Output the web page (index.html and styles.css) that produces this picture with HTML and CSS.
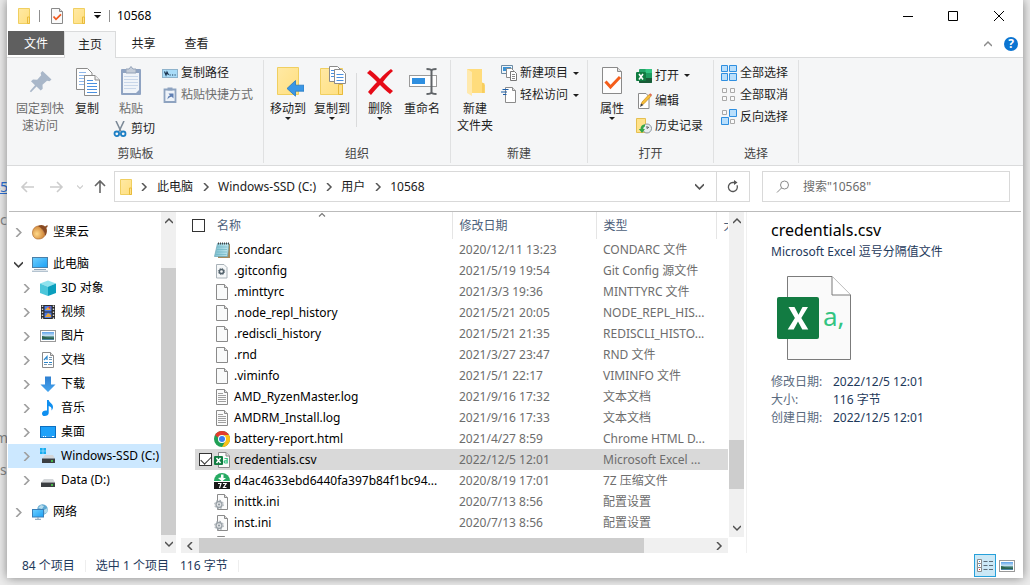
FILE: index.html
```html
<!DOCTYPE html>
<html lang="zh-CN">
<head>
<meta charset="utf-8">
<title>10568</title>
<link rel="stylesheet" href="styles.css">
</head>
<body>
<svg class="sprite" aria-hidden="true">
  <defs>
    <linearGradient id="gFold" x1="0" x2="1" y1="0" y2="1"><stop offset="0" stop-color="#ffe9a4"/><stop offset="1" stop-color="#ffdf80"/></linearGradient>
    <linearGradient id="gScreen" x1="0" x2="1" y1="0" y2="1"><stop offset="0" stop-color="#6fd0ff"/><stop offset="1" stop-color="#1aa0f5"/></linearGradient>
    <linearGradient id="gBlue" x1="0" x2="0" y1="0" y2="1"><stop offset="0" stop-color="#2f7fd0"/><stop offset="1" stop-color="#45a5f0"/></linearGradient>
    <linearGradient id="gNote" x1="0" x2="1" y1="0" y2="0"><stop offset="0" stop-color="#7fc0d0"/><stop offset="1" stop-color="#c3e8ee"/></linearGradient>
    <linearGradient id="gSky" x1="0" x2="0" y1="0" y2="1"><stop offset="0" stop-color="#5da2ea"/><stop offset=".5" stop-color="#cfe6f5"/><stop offset=".6" stop-color="#3c7a6a"/><stop offset="1" stop-color="#4f86b0"/></linearGradient>
    <radialGradient id="gNut" cx=".35" cy=".6" r=".7"><stop offset="0" stop-color="#ffd98a"/><stop offset="1" stop-color="#c9782a"/></radialGradient>
  </defs>
  <symbol id="folder" viewBox="0 0 16 16"><path d="M2.5.5h11v15h-11z" fill="url(#gFold)" stroke="#f0cf60"/><path d="M11.500 15.500v-6.500h2v6.500z" fill="#ffe08a" stroke="#e8bb3a"/></symbol>
  <symbol id="doc-check" viewBox="0 0 16 16"><path d="M2.500.5h8l3 3v12h-11z" fill="#fafafa" stroke="#8a8a8a"/><path d="M10.500.5v3h3" fill="#ddd" stroke="#8a8a8a"/><path d="M4.500 8.500l2.500 2.800 5-5" fill="none" stroke="#f0591e" stroke-width="1.800"/></symbol>
  <symbol id="pin" viewBox="0 0 32 32"><path d="M17.500 6l9 8.500-2 1.800-2.500-.5-4.500 4 .2 4-2 1.800-4.200-4.200L6 27.200l-1.200-1 5.200-6-4-4 2-1.800 4.200.4 4-4.500-.6-2.400z" transform="translate(1 -1)" fill="#a9b7c9"/></symbol>
  <symbol id="copy" viewBox="0 0 32 32"><path d="M5.500 2.500h11l4.500 4.500v16.500H5.500z" fill="#fff" stroke="#8b8b8b"/><path d="M8 9.500h8M8 12.500h8M8 15.500h8M8 18.500h8M8 6.500h7" stroke="#8fb7ea"/><path d="M13.500 9.500h10.500l4.500 4.500v15.500h-15z" fill="#fff" stroke="#8b8b8b"/><path d="M24 9.500v4.500h4.500" fill="#eee" stroke="#8b8b8b"/><path d="M16 14.500h6M16 17.500h10M16 20.500h10M16 23.500h10M16 26.500h10" stroke="#4a90e0"/></symbol>
  <symbol id="paste" viewBox="0 0 32 32"><rect x="6" y="3" width="20" height="26" rx="1" fill="#8fa3c2"/><path d="M8 7h16v17l-3 3H8z" fill="#f0f4f9"/><path d="M9 10.500h14M9 13.500h14M9 16.500h14M9 19.500h14M9 22.500h12" stroke="#c9d7ea"/><path d="M11 3h3l2-2.500L18 3h3v4H11z" fill="#c4ccd8" stroke="#93a2b8"/></symbol>
  <symbol id="scissors" viewBox="0 0 16 16"><path d="M4 0l5 10.500M12 0L7 10.500" stroke="#7c8a98" stroke-width="1.600"/><circle cx="4.800" cy="12.800" r="2.300" fill="none" stroke="#1d7fc4" stroke-width="1.800"/><circle cx="11.200" cy="12.800" r="2.300" fill="none" stroke="#1d7fc4" stroke-width="1.800"/></symbol>
  <symbol id="path" viewBox="0 0 16 16"><rect x=".5" y="4.500" width="15" height="8" fill="#a9dcf8" stroke="#8fb3cc"/><path d="M2.500 6.500l1.500 3.500 1-3 1.500 3M7.500 10h1.200M10 10h1.200M12.500 10h1.200" fill="none" stroke="#1c3550" stroke-width="1.200"/></symbol>
  <symbol id="shortcut" viewBox="0 0 16 16"><path d="M2.500 2.500h11v12.500h-11z" fill="#eef3f9" stroke="#8ea3c0" stroke-width="1.800"/><path d="M5.500.5h5v3h-5z" fill="#8ea3c0"/><path d="M5.500 12.500c0-3 1.200-3.700 2.700-4L6.500 6.500h5v5L9.800 9.800c-2 .2-3 1-4.300 2.700z" fill="#5f7fb3"/></symbol>
  <symbol id="move-to" viewBox="0 0 32 32"><path d="M5.500 1.500h21v27h-21z" fill="url(#gFold)" stroke="#f0cf60"/><path d="M15 22.500l8.500-8v4.700h8.500v6h-8.500v5z" fill="#3a97e6" stroke="#2578c0" stroke-width=".8"/></symbol>
  <symbol id="copy-to" viewBox="0 0 32 32"><path d="M4.500 2.500h22v26h-22z" fill="url(#gFold)" stroke="#f0cf60"/><path d="M22.500 28.500v-10h4v10z" fill="#ffe08a" stroke="#e8bb3a"/><path d="M13.500.5h8l3 3v12h-11z" fill="#fff" stroke="#8b8b8b"/><path d="M15 4.500h5M15 7.500h5M15 10.500h5" stroke="#4a90e0"/><path d="M18.500 3.500h7l4 4v10h-11z" fill="#fff" stroke="#8b8b8b"/><path d="M20.500 8.500h7M20.500 11.500h7M20.500 14.500h7" stroke="#4a90e0"/></symbol>
  <symbol id="delete" viewBox="0 0 32 32"><path d="M6 4c4 3 7 6 10 9 3-4 7-7 11-10l2 2c-4 3-7 7-10 11 3 3 6 6 10 9l-3 3c-4-3-7-6-10-9-3 3-6 6-9 10l-3-3c3-4 6-7 9-10-3-3-6-6-10-9z" fill="#e60b17"/></symbol>
  <symbol id="rename" viewBox="0 0 32 32"><rect x="3.500" y="9.500" width="27" height="11" fill="#fff" stroke="#9a9a9a"/><rect x="6" y="12" width="13" height="6" fill="#2f8fe0"/><path d="M25.500 4v24M20.500 3c3 0 5 .5 5 2 0-1.500 2-2 5-2M20.500 28c3 0 5-.5 5-2 0 1.500 2 2 5 2" fill="none" stroke="#606468" stroke-width="2"/></symbol>
  <symbol id="new-folder" viewBox="0 0 32 32"><path d="M8 3h15v14l3 2v8H8z" fill="#ffdc7c"/><path d="M8 3l5 3v24l-5-3z" fill="#ffe9ad"/><path d="M23 16.500l2.500 1V27H23z" fill="#f8ce5e"/></symbol>
  <symbol id="new-item" viewBox="0 0 16 16"><path d="M.5.5h11v8H.5z" fill="#eef6fc" stroke="#6c8aa3"/><path d="M2 2h8v4H2z" fill="#3a93d6"/><path d="M5.500 3.500h5l2 2v7h-7z" fill="#fff" stroke="#8b8b8b"/><path d="M9.500 6.500h4l2 2v7h-6z" fill="#fff" stroke="#777"/><path d="M11 9.500h3M11 11.500h3M11 13.500h3" stroke="#888"/></symbol>
  <symbol id="easy" viewBox="0 0 16 16"><path d="M4.500.5h7l3 3v12h-10z" fill="#fff" stroke="#8b8b8b"/><path d="M11.500.5v3h3" fill="#ddd" stroke="#8b8b8b"/><path d="M1.500 2.500h6M0 5h6M2 7.500h3.500" stroke="#1d5ea8" stroke-width="1.200"/></symbol>
  <symbol id="props" viewBox="0 0 32 32"><path d="M6.500 1.500h15l4 4v22h-19z" fill="#fdfdfd" stroke="#8a8a8a"/><path d="M21.500 1.500v4h4" fill="#ddd" stroke="#8a8a8a"/><path d="M9.500 15.500l5 5.500 9.500-10" fill="none" stroke="#f45d1a" stroke-width="3"/></symbol>
  <symbol id="excel" viewBox="0 0 16 16"><rect x="3" y="1" width="13" height="14" rx="1" fill="#21a366"/><path d="M9.500 1H15a1 1 0 011 1v3H9.500z" fill="#33c481"/><path d="M3 10h13v4a1 1 0 01-1 1H4a1 1 0 01-1-1z" fill="#185c37"/><path d="M9.500 5H16v5H9.500z" fill="#1f9d60"/><rect y="4" width="10" height="9" rx="1" fill="#107c41"/><path d="M3 6l4 5.500M7 6l-4 5.500" stroke="#fff" stroke-width="1.600"/></symbol>
  <symbol id="edit" viewBox="0 0 16 16"><path d="M2.500.5h7.500l3 3v12H2.500z" fill="#fff" stroke="#8b8b8b"/><path d="M5 12l1-3 7-7.500 2 1.700-7 7.500z" fill="#f6bf3a" stroke="#c98a20" stroke-width=".7"/><path d="M13 1.500l1.200-1.200 2 1.700L15 3.200z" fill="#e06a50"/><path d="M4 14l1-3.500L7.500 12z" fill="#444"/></symbol>
  <symbol id="history" viewBox="0 0 16 16"><path d="M.5.5h9v14h-9z" fill="#ffe28a" stroke="#e5bf50"/><circle cx="11" cy="10.500" r="4.500" fill="#e8edf0" stroke="#8c969e"/><path d="M11 8v2.500l2-1.500" fill="none" stroke="#555"/><path d="M9 6.500c-3 0-4.500 2-4.500 4.500H2.800L6 15l3-4H7.300c0-1.500.7-2.500 1.700-2.500z" fill="#36a64a"/></symbol>
  <symbol id="sel-all" viewBox="0 0 16 16"><path d="M.5.5h6v6h-6zM8.500.5h7v6h-7zM.5 8.500h6v7h-6zM8.500 8.500h7v7h-7z" fill="#b9dffc" stroke="#2f8fe0"/></symbol>
  <symbol id="sel-none" viewBox="0 0 16 16"><path d="M1.500 1.500h4v4h-4zM9.500 1.500h4v4h-4zM1.500 9.500h4v4h-4zM9.500 9.500h4v4h-4z" fill="#fafafa" stroke="#a9a9a9"/></symbol>
  <symbol id="sel-inv" viewBox="0 0 16 16"><path d="M1.500 1.500h4v4h-4zM9.500 10.500h4v4h-4z" fill="#fafafa" stroke="#a9a9a9"/><path d="M8.500.5h7v7h-7zM.5 8.500h7v7h-7z" fill="#b9dffc" stroke="#2f8fe0"/></symbol>
  <symbol id="nut" viewBox="0 0 16 16"><path d="M.5 8C1 4 4 1.500 8 2l5 8c0 3-3 5.500-8 5C1.500 14 .2 11 .5 8z" fill="url(#gNut)" stroke="#a9652a" stroke-width=".6"/><path d="M6 2c3-2 6-1 7 .5L15.500 1v2l-1.200.7c1.200 2.500.7 5.300-.8 8.300C12.500 8 10 4 6 2z" fill="#8a4b22"/></symbol>
  <symbol id="pc" viewBox="0 0 16 16"><rect x=".5" y="1.500" width="15" height="10" fill="url(#gScreen)" stroke="#4a7fa8"/><path d="M2 13.500h12M0 15.200h16" stroke="#93a8bb"/></symbol>
  <symbol id="cube" viewBox="0 0 16 16"><path d="M0 3.500L8 .5l8 3-8 3.300z" fill="#8fe3ee"/><path d="M0 3.500l8 3.300V16l-8-3z" fill="#4cc6da"/><path d="M16 3.500L8 6.800V16l8-3z" fill="#0a9fbd"/></symbol>
  <symbol id="video" viewBox="0 0 16 16"><path d="M1 1h14v14H1z" fill="#2b2b2b"/><path d="M2.500 1.500v14M13.500 1.500v14" stroke="#ddd" stroke-width="1.400" stroke-dasharray="1.500 1.500"/><path d="M4.500 2h7v5.500h-7zM4.500 8.500h7V14h-7z" fill="#4b7be8"/><path d="M5 6l3-3 3 3zM5 13l3-4 3 2v2z" fill="#e8a53a"/><circle cx="9.500" cy="3.500" r="1" fill="#d33"/></symbol>
  <symbol id="picture" viewBox="0 0 16 16"><rect x=".5" y="2.500" width="15" height="11" fill="#fff" stroke="#9a9a9a"/><rect x="2" y="4" width="12" height="8" fill="url(#gSky)"/><path d="M2 8l5 1.500 7 .5v1H2z" fill="#2c6350"/></symbol>
  <symbol id="docs" viewBox="0 0 16 16"><path d="M2.500.5h8l3 3v12h-11z" fill="#fff" stroke="#8a8a8a"/><path d="M10.500.5v3h3" fill="#ddd" stroke="#8a8a8a"/><path d="M9 5.500h3M9 7.500h3M4 12.500h3M8 12.500h4" stroke="#7898b0"/><path d="M4 8l3-3.500V8M4 10.500h4M9 10.500h3" fill="none" stroke="#2a86cc" stroke-width="1.200"/></symbol>
  <symbol id="download" viewBox="0 0 16 16"><path d="M5 .5h6v8h4.500L8 16 .5 8.500H5z" fill="url(#gBlue)"/></symbol>
  <symbol id="music" viewBox="0 0 16 16"><path d="M7 0h1.700c.5 3 4.300 3.500 4.300 7 0 1.500-.6 2.500-1.500 3.500.5-3-1-4-2.800-4.500V13c0 2-2 3-4 3S2 14.800 2 13.400C2 11.500 4.500 10 7 10.600z" fill="#0f8ff0"/></symbol>
  <symbol id="desktop" viewBox="0 0 16 16"><rect x=".5" y="2.500" width="15" height="11" fill="url(#gBlue)" stroke="#0d6fc0"/><path d="M1 3h14v9H1z" fill="#1da1fa"/><path d="M3 12.500h1M5 12.500h1M12 12.500h2" stroke="#fff"/></symbol>
  <symbol id="drive" viewBox="0 0 16 16"><path d="M4 7h9l2 3.500H1z" fill="#d3d6d9"/><path d="M1 10.500h14V15H1z" fill="#3c3f42"/><path d="M11 13h2" stroke="#4be04b" stroke-width="1.400"/></symbol>
  <symbol id="windrive" viewBox="0 0 16 16"><path d="M5 7h8l2 3.500H2z" fill="#d3d6d9"/><path d="M2 10.500h13V15H2z" fill="#3c3f42"/><path d="M11 13h2" stroke="#4be04b" stroke-width="1.400"/><path d="M0 0h2.700v2.700H0zM3.300 0H6v2.700H3.300zM0 3.300h2.700V6H0zM3.300 3.300H6V6H3.300z" fill="#18aef0"/></symbol>
  <symbol id="network" viewBox="0 0 16 16"><circle cx="10.500" cy="5.500" r="5.300" fill="#5ea8d2"/><path d="M6 4l3-3 3 1-2 3zM12 6l3.500-2v4l-3 2z" fill="#b6dcec"/><rect x=".5" y="5.500" width="11" height="7.500" fill="url(#gScreen)" stroke="#3a7fb8"/><path d="M6 13v2M3 15.300h6" stroke="#7f9bb3"/></symbol>
  <symbol id="notepad" viewBox="0 0 16 16"><path d="M4 2h12v14H4z" fill="#a88a5a"/><path d="M3.500 1.500H15L13.500 14.500H.5z" fill="url(#gNote)" stroke="#69a5b5" stroke-width=".7"/><path d="M3 5h10.500M3 7.500h10M2.500 10h10.500M2 12.500h10.500" stroke="#6fb4c4" stroke-width=".7"/><path d="M4 1.500h11" stroke="#444" stroke-width="2" stroke-dasharray="1 1"/></symbol>
  <symbol id="gitcfg" viewBox="0 0 16 16"><path d="M2.500 1.500h7.500l3 3v10.500H2.500z" fill="#f6f8f9" stroke="#a9b2b8"/><circle cx="7.500" cy="8.500" r="2.100" fill="none" stroke="#53626c" stroke-width="1.500"/><circle cx="7.500" cy="8.500" r="3.200" fill="none" stroke="#53626c" stroke-width=".8" stroke-dasharray="1.300 1.210"/></symbol>
  <symbol id="file" viewBox="0 0 16 16"><path d="M2.500.5h8l3 3v12h-11z" fill="#f9fafa" stroke="#8a8a8a"/><path d="M10.500.5v3h3" fill="#ddd" stroke="#8a8a8a"/></symbol>
  <symbol id="text" viewBox="0 0 16 16"><path d="M2.500.5h8l3 3v12h-11z" fill="#fbfbfb" stroke="#8a8a8a"/><path d="M10.500.5v3h3" fill="#ddd" stroke="#8a8a8a"/><path d="M4 4.500h5M4 6.500h8M4 8.500h8M4 10.500h8M4 12.500h8" stroke="#a0a0a0"/></symbol>
  <symbol id="chrome" viewBox="0 0 16 16"><circle cx="8" cy="8" r="8" fill="#1fa055"/><path d="M8 0a8 8 0 016.930 4H8a4 4 0 00-3.800 2.800L1.070 4A8 8 0 018 0z" fill="#e33b2e"/><path d="M14.930 4A8 8 0 018 16l3.460-6A4 4 0 0011 5.500L10 4z" fill="#fbc116"/><circle cx="8" cy="8" r="4" fill="#fff"/><circle cx="8" cy="8" r="3" fill="#3a7df0"/></symbol>
  <symbol id="csv" viewBox="0 0 16 16"><path d="M4.500.5H12l3.500 3.500v11.500h-11z" fill="#fafafa" stroke="#8a8a8a"/><path d="M12 .5v3.500h3.500" fill="#ddd" stroke="#8a8a8a"/><rect y="4" width="9" height="9" rx="1" fill="#107c41"/><path d="M2.500 6l4 5M6.500 6l-4 5" stroke="#fff" stroke-width="1.500"/><path d="M10.500 6.500h2.700V11h-2.200c-1.200-.3-1.200-2 0-2.200h2" fill="none" stroke="#33c481" stroke-width="1.200"/></symbol>
  <symbol id="seven" viewBox="0 0 16 16"><path d="M0 8a8 8 0 0116 0z" fill="#27ab63"/><path d="M7 1.500h2.500V5H12L8 8.500 4 5l3-.5z" fill="#fff"/><path d="M0 9h16v7H0z" fill="#191919"/><path d="M4 10.500h3l-1.500 4.500M9 10.500h3.200L9.500 14.500h3" fill="none" stroke="#fff" stroke-width="1.100"/></symbol>
  <symbol id="ini" viewBox="0 0 16 16"><path d="M3.500.5h7l3 3v12h-10z" fill="#fbfbfb" stroke="#8a8a8a"/><path d="M10.500.5v3h3" fill="#ddd" stroke="#8a8a8a"/><circle cx="5" cy="10.500" r="3" fill="#e2e4e6" stroke="#9aa2a8" stroke-width="1.400"/><circle cx="5" cy="10.500" r="4.300" fill="none" stroke="#9aa2a8" stroke-dasharray="1.700 1.650"/><circle cx="5" cy="10.500" r="1" fill="#8a949c"/></symbol>
  <symbol id="chev-r" viewBox="0 0 8 8"><path d="M2 0l4 4-4 4" fill="none" stroke="currentColor" stroke-width="1.500"/></symbol>
  <symbol id="chev-d" viewBox="0 0 8 8"><path d="M0 2l4 4 4-4" fill="none" stroke="currentColor" stroke-width="1.500"/></symbol>
  <symbol id="chev-u" viewBox="0 0 8 8"><path d="M0 6l4-4 4 4" fill="none" stroke="currentColor" stroke-width="1.500"/></symbol>
  <symbol id="chev-l" viewBox="0 0 8 8"><path d="M6 0L2 4l4 4" fill="none" stroke="currentColor" stroke-width="1.500"/></symbol>
  <symbol id="arrow" viewBox="0 0 16 16"><path d="M2 8h12M7 3L2 8l5 5" fill="none" stroke="currentColor" stroke-width="1.600"/></symbol>
  <symbol id="refresh" viewBox="0 0 16 16"><path d="M12 6.200A4.500 4.500 0 118 3.500h3" fill="none" stroke="currentColor" stroke-width="1.300"/><path d="M9 1l3.500 2.500L9 6z" fill="currentColor"/></symbol>
  <symbol id="search" viewBox="0 0 16 16"><circle cx="9.500" cy="6" r="4" fill="none" stroke="currentColor"/><path d="M6.500 9L2 13.500" stroke="currentColor"/></symbol>
</svg>

<div class="behind" aria-hidden="true"><span class="frag link">45</span><span class="frag co">co</span><span class="frag em">m</span><span class="frag es">s</span></div>

<div class="window">
  <header class="titlebar">
    <svg class="i16"><use href="#folder"/></svg><i class="tick"></i>
    <svg class="i16"><use href="#doc-check"/></svg>
    <svg class="i16"><use href="#folder"/></svg>
    <button class="qat" aria-label="自定义快速访问工具栏"><svg viewBox="0 0 8 8"><path d="M0 .500h7" stroke="#111"/><path d="M0 3h7L3.500 6.500z" fill="#111"/></svg></button><i class="tick"></i>
    <h1>10568</h1>
    <div class="caption">
      <button aria-label="最小化"><svg viewBox="0 0 10 10"><path d="M0 5.500h10" stroke="#000"/></svg></button>
      <button aria-label="最大化"><svg viewBox="0 0 10 10"><path d="M.5.5h9v9h-9z" fill="none" stroke="#000"/></svg></button>
      <button aria-label="关闭"><svg viewBox="0 0 10 10"><path d="M0 0l10 10M10 0L0 10" stroke="#000"/></svg></button>
    </div>
  </header>

  <nav class="tabs">
    <button class="tab file">文件</button><button class="tab active">主页</button><button class="tab">共享</button><button class="tab">查看</button>
    <span class="tools">
      <button aria-label="折叠功能区"><svg class="chev"><use href="#chev-u"/></svg></button>
      <button class="help" aria-label="帮助">?</button>
    </span>
  </nav>

  <section class="ribbon">
    <div class="group">
      <div class="body clip">
        <button class="big pinb" disabled><svg><use href="#pin"/></svg>固定到快<br>速访问</button>
        <button class="big narrow"><svg><use href="#copy"/></svg>复制</button>
        <div class="pastecol">
          <button class="big" disabled><svg><use href="#paste"/></svg>粘贴</button>
          <button class="small"><svg class="i16"><use href="#scissors"/></svg>剪切</button>
        </div>
        <div class="list">
          <button class="small"><svg class="i16"><use href="#path"/></svg>复制路径</button>
          <button class="small" disabled><svg class="i16"><use href="#shortcut"/></svg>粘贴快捷方式</button>
        </div>
      </div>
      <h2>剪贴板</h2>
    </div>
    <div class="group">
      <div class="body org">
        <button class="big"><svg><use href="#move-to"/></svg>移动到<i class="caret"></i></button>
        <button class="big"><svg><use href="#copy-to"/></svg>复制到<i class="caret"></i></button>
        <i class="rule"></i>
        <button class="big mid"><svg><use href="#delete"/></svg>删除<i class="caret"></i></button>
        <button class="big"><svg><use href="#rename"/></svg>重命名</button>
      </div>
      <h2>组织</h2>
    </div>
    <div class="group">
      <div class="body make">
        <button class="big"><svg><use href="#new-folder"/></svg>新建<br>文件夹</button>
        <div class="list">
          <button class="small"><svg class="i16"><use href="#new-item"/></svg>新建项目<i class="caret"></i></button>
          <button class="small"><svg class="i16"><use href="#easy"/></svg>轻松访问<i class="caret"></i></button>
        </div>
      </div>
      <h2>新建</h2>
    </div>
    <div class="group">
      <div class="body open">
        <button class="big mid"><svg><use href="#props"/></svg>属性<i class="caret"></i></button>
        <div class="list loose">
          <button class="small"><svg class="i16"><use href="#excel"/></svg>打开<i class="caret"></i></button>
          <button class="small"><svg class="i16"><use href="#edit"/></svg>编辑</button>
          <button class="small"><svg class="i16"><use href="#history"/></svg>历史记录</button>
        </div>
      </div>
      <h2>打开</h2>
    </div>
    <div class="group">
      <div class="body select">
        <div class="list">
          <button class="small"><svg class="i16"><use href="#sel-all"/></svg>全部选择</button>
          <button class="small"><svg class="i16"><use href="#sel-none"/></svg>全部取消</button>
          <button class="small"><svg class="i16"><use href="#sel-inv"/></svg>反向选择</button>
        </div>
      </div>
      <h2>选择</h2>
    </div>
  </section>

  <section class="address">
    <button class="go off" aria-label="后退"><svg><use href="#arrow"/></svg></button>
    <button class="go off" aria-label="前进"><svg class="right"><use href="#arrow"/></svg></button>
    <button class="recent off" aria-label="最近位置"><svg><use href="#chev-d"/></svg></button>
    <button class="go up" aria-label="上移"><svg class="upward"><use href="#arrow"/></svg></button>
    <div class="crumbs">
      <svg class="i16"><use href="#folder"/></svg>
      <svg class="sep"><use href="#chev-r"/></svg><a href="#pc-root">此电脑</a>
      <svg class="sep"><use href="#chev-r"/></svg><a href="#ssd">Windows-SSD (C:)</a>
      <svg class="sep"><use href="#chev-r"/></svg><a href="#users">用户</a>
      <svg class="sep"><use href="#chev-r"/></svg><a href="#here">10568</a>
      <button class="drop" aria-label="以前的位置"><svg><use href="#chev-d"/></svg></button>
    </div>
    <button class="reload" aria-label="刷新"><svg class="i16"><use href="#refresh"/></svg></button>
    <label class="search"><svg class="i16"><use href="#search"/></svg><input type="text" aria-label="搜索" placeholder='搜索"10568"'></label>
  </section>

  <main class="main">
    <ul class="tree">
      <li class="root"><svg class="exp"><use href="#chev-r"/></svg><svg class="i16"><use href="#nut"/></svg><a href="#nut-root">坚果云</a></li>
      <li class="root"><svg class="exp dark"><use href="#chev-d"/></svg><svg class="i16"><use href="#pc"/></svg><a href="#pc-root">此电脑</a></li>
      <li><svg class="exp"><use href="#chev-r"/></svg><svg class="i16"><use href="#cube"/></svg><a href="#a">3D 对象</a></li>
      <li><svg class="exp"><use href="#chev-r"/></svg><svg class="i16"><use href="#video"/></svg><a href="#b">视频</a></li>
      <li><svg class="exp"><use href="#chev-r"/></svg><svg class="i16"><use href="#picture"/></svg><a href="#c">图片</a></li>
      <li><svg class="exp"><use href="#chev-r"/></svg><svg class="i16"><use href="#docs"/></svg><a href="#d">文档</a></li>
      <li><svg class="exp"><use href="#chev-r"/></svg><svg class="i16"><use href="#download"/></svg><a href="#e">下载</a></li>
      <li><svg class="exp"><use href="#chev-r"/></svg><svg class="i16"><use href="#music"/></svg><a href="#f">音乐</a></li>
      <li><svg class="exp"><use href="#chev-r"/></svg><svg class="i16"><use href="#desktop"/></svg><a href="#g">桌面</a></li>
      <li class="on"><svg class="exp"><use href="#chev-r"/></svg><svg class="i16"><use href="#windrive"/></svg><a href="#ssd">Windows-SSD (C:)</a></li>
      <li><svg class="exp"><use href="#chev-r"/></svg><svg class="i16"><use href="#drive"/></svg><a href="#h">Data (D:)</a></li>
      <li class="root"><svg class="exp"><use href="#chev-r"/></svg><svg class="i16"><use href="#network"/></svg><a href="#i">网络</a></li>
    </ul>
    <div class="vbar"><svg><use href="#chev-u"/></svg><div class="track nav-track"><i></i></div><svg><use href="#chev-d"/></svg></div>

    <section class="files">
      <div class="filebody">
        <div class="view">
          <table>
            <colgroup><col class="c-gut"><col class="c-chk"><col class="c-name"><col class="c-date"><col class="c-type"><col></colgroup>
            <thead><tr><th colspan="2"><input type="checkbox" aria-label="全选"></th><th class="name">名称<svg class="sort"><use href="#chev-u"/></svg></th><th>修改日期</th><th>类型</th><th>大小</th></tr></thead>
            <tbody>
              <tr><td></td><td></td><td><span class="fn"><svg class="i16"><use href="#notepad"/></svg>.condarc</span></td><td>2020/12/11 13:23</td><td>CONDARC 文件</td><td></td></tr>
              <tr><td></td><td></td><td><span class="fn"><svg class="i16"><use href="#gitcfg"/></svg>.gitconfig</span></td><td>2021/5/19 19:54</td><td>Git Config 源文件</td><td></td></tr>
              <tr><td></td><td></td><td><span class="fn"><svg class="i16"><use href="#file"/></svg>.minttyrc</span></td><td>2021/3/3 19:36</td><td>MINTTYRC 文件</td><td></td></tr>
              <tr><td></td><td></td><td><span class="fn"><svg class="i16"><use href="#file"/></svg>.node_repl_history</span></td><td>2021/5/21 20:05</td><td>NODE_REPL_HIS...</td><td></td></tr>
              <tr><td></td><td></td><td><span class="fn"><svg class="i16"><use href="#file"/></svg>.rediscli_history</span></td><td>2021/5/21 21:35</td><td>REDISCLI_HISTO...</td><td></td></tr>
              <tr><td></td><td></td><td><span class="fn"><svg class="i16"><use href="#file"/></svg>.rnd</span></td><td>2021/3/27 23:47</td><td>RND 文件</td><td></td></tr>
              <tr><td></td><td></td><td><span class="fn"><svg class="i16"><use href="#file"/></svg>.viminfo</span></td><td>2021/5/1 22:17</td><td>VIMINFO 文件</td><td></td></tr>
              <tr><td></td><td></td><td><span class="fn"><svg class="i16"><use href="#text"/></svg>AMD_RyzenMaster.log</span></td><td>2021/9/16 17:32</td><td>文本文档</td><td></td></tr>
              <tr><td></td><td></td><td><span class="fn"><svg class="i16"><use href="#text"/></svg>AMDRM_Install.log</span></td><td>2021/9/16 17:33</td><td>文本文档</td><td></td></tr>
              <tr><td></td><td></td><td><span class="fn"><svg class="i16"><use href="#chrome"/></svg>battery-report.html</span></td><td>2021/4/27 8:59</td><td>Chrome HTML D...</td><td></td></tr>
              <tr class="sel"><td></td><td><input type="checkbox" checked aria-label="credentials.csv"></td><td><span class="fn"><svg class="i16"><use href="#csv"/></svg>credentials.csv</span></td><td>2022/12/5 12:01</td><td>Microsoft Excel ...</td><td></td></tr>
              <tr><td></td><td></td><td><span class="fn"><svg class="i16"><use href="#seven"/></svg>d4ac4633ebd6440fa397b84f1bc94...</span></td><td>2020/8/19 17:01</td><td>7Z 压缩文件</td><td></td></tr>
              <tr><td></td><td></td><td><span class="fn"><svg class="i16"><use href="#ini"/></svg>inittk.ini</span></td><td>2020/7/13 8:56</td><td>配置设置</td><td></td></tr>
              <tr><td></td><td></td><td><span class="fn"><svg class="i16"><use href="#ini"/></svg>inst.ini</span></td><td>2020/7/13 8:56</td><td>配置设置</td><td></td></tr>
              <tr><td></td><td></td><td><span class="fn"><svg class="i16"><use href="#ini"/></svg></span></td><td></td><td></td><td></td></tr>
            </tbody>
          </table>
        </div>
        <div class="vbar"><svg><use href="#chev-u"/></svg><div class="track list-track"><i></i></div><svg><use href="#chev-d"/></svg></div>
      </div>
      <div class="hbar"><svg><use href="#chev-l"/></svg><div class="track"><i></i></div><svg><use href="#chev-r"/></svg></div>
    </section>

    <aside class="preview">
      <h2>credentials.csv</h2>
      <p>Microsoft Excel 逗号分隔值文件</p>
      <svg class="thumb" viewBox="0 0 74 84"><path d="M10.500.5H55L73.500 19v64.500h-63z" fill="#fafafa" stroke="#7b7b7b"/><path d="M55 .5V19h18.500" fill="#fff" stroke="#7b7b7b"/><rect y="21" width="42" height="42" rx="2" fill="#127b42"/><path d="M11.500 31h6l4 7.800 4-7.800h5.500l-6.700 11 7 11.500h-6l-4.300-8-4.300 8h-6l7.200-11.500z" fill="#fff"/><text x="46" y="50" class="acomma">a,</text></svg>
      <dl><dt>修改日期:</dt><dd>2022/12/5 12:01</dd><dt>大小:</dt><dd>116 字节</dd><dt>创建日期:</dt><dd>2022/12/5 12:01</dd></dl>
    </aside>
  </main>

  <footer class="status">
    <span>84 个项目</span><span class="chosen">选中 1 个项目</span><span class="size">116 字节</span>
    <div class="modes">
      <button class="on" aria-label="详细信息"><svg viewBox="0 0 16 16"><path d="M.5 1.500h4v4h-4zM.5 5.500h4v4h-4zM.5 9.500h4v4h-4z" fill="#fff" stroke="#8a8a8a"/><path d="M2 3.500h1M2 7.500h1" stroke="#2f8fe0"/><path d="M2 11.500h1" stroke="#d33"/><path d="M6.500 3.500h4M12 3.500h4M6.500 7.500h4M12 7.500h4M6.500 11.500h4M12 11.500h4" stroke="#5c6c78"/></svg></button>
      <button aria-label="大图标"><svg><use href="#picture"/></svg></button>
    </div>
  </footer>
</div>
</body>
</html>
```
FILE: styles.css
```css
* { box-sizing: border-box; }
html, body { height: 100%; }
body {
  margin: 0;
  padding: 0 7px 7px;
  background: #ececec;
  font: 12px/18px "Noto Sans", "Noto Sans CJK SC", sans-serif;
  color: #000;
  overflow: hidden;
}
button, input { font: inherit; color: inherit; border: 0; padding: 0; margin: 0; background: none; }
button { white-space: nowrap; }
h1, h2, p, ul, dl, dd { margin: 0; padding: 0; font-size: 12px; font-weight: 400; }
a { color: inherit; text-decoration: none; }
svg { display: block; flex: none; }
.sprite { position: absolute; width: 0; height: 0; }
.i16 { width: 16px; height: 16px; }

/* page of another window showing at the left edge */
.behind { position: absolute; left: 0; top: 0; width: 8px; height: 100%; overflow: hidden; }
.frag { position: absolute; color: #888; font-size: 14px; }
.link { top: 178px; right: 0; color: #2a6fd6; text-decoration: underline; }
.co { top: 211px; left: 0; }
.em { top: 429px; right: 0; }
.es { top: 461px; left: 0; }

.window {
  position: relative;
  display: flex;
  flex-direction: column;
  height: 100%;
  background: #fff;
  box-shadow: 0 0 10px rgba(0, 0, 0, .45);
}

.titlebar { display: flex; align-items: center; height: 31px; padding-left: 9px; flex: none; }
.tick { width: 1px; height: 12px; background: #8f8f8f; margin: 0 9px 0 7px; }
.titlebar .i16 + .i16 { margin-left: 6px; }
.qat { margin-left: 7px; }
.qat svg { width: 8px; height: 8px; }
.titlebar h1 { margin-left: -2px; }
.caption { margin-left: auto; display: flex; }
.caption button { width: 45px; height: 30px; display: grid; place-items: center; }
.caption button:last-child { width: 48px; }
.caption svg { width: 10px; height: 10px; }

.tabs { display: flex; height: 27px; padding-left: 1px; border-bottom: 1px solid #dadbdc; flex: none; }
.tab { width: 53px; height: 24px; padding-top: 1px; color: #222; }
.tab.file { width: 56px; background: #5f5f5f; color: #fff; }
.tab.active { width: 52px; height: 27px; padding-bottom: 2px; margin-right: 1px; background: #f5f6f7; border: 1px solid #dadbdc; border-bottom: 0; }
.tools { display: flex; gap: 12px; align-items: center; margin-left: auto; padding-right: 5px; color: #8b8b8b; }
.tools .chev { width: 8px; height: 8px; }
.help { width: 14px; height: 14px; line-height: 14px; border-radius: 50%; background: #0b74d1; color: #fff; font-weight: 700; text-align: center; }

.ribbon { display: flex; flex: none; height: 108px; padding: 2px 0 2px 1px; background: #f5f6f7; border-bottom: 1px solid #dadbdc; color: #1e1e1e; }
.group { display: flex; flex-direction: column; border-right: 1px solid #e0e1e2; }
.group h2 { text-align: center; color: #444; }
.body { display: flex; flex: 1; align-items: flex-start; }
.clip { padding: 0 10px 0 4px; }
.org { padding: 0 6px 0 2px; }
.make { padding: 0 8px 0 2px; }
.open { padding: 0 10px 0 4px; }
.select { padding: 0 10px 0 7px; }
.big { display: block; width: 44px; padding-top: 6px; line-height: 17px; text-align: center; }
.big svg { width: 32px; height: 32px; margin: 0 auto 2px; }
.big.pinb { width: 56px; }
.big.narrow { width: 38px; }
.big.mid { width: 40px; }
button:disabled { color: #6d6d6d; }
.caret { display: block; width: 0; border: 3px solid transparent; border-top-color: #1e1e1e; border-bottom: 0; }
.big .caret { margin: 0 auto; }
.small .caret { margin-left: 2px; }
.small { display: flex; align-items: center; gap: 3px; height: 22px; }
.list { padding-top: 2px; margin-left: 4px; }
.clip .list { margin-left: 6px; }
.select .list { margin-left: 0; }
.body .loose { padding-top: 3px; }
.loose .small { height: 25px; }
.pastecol { width: 50px; }
.pastecol .big { width: 50px; }
.pastecol .small { margin: 1px 0 0 6px; }
.rule { width: 1px; height: 54px; margin: 13px 3px 0 2px; background: #dadbdc; }

.address { display: flex; align-items: center; flex: none; height: 46px; padding: 0 11px 4px 10px; margin: 0 2px; border-bottom: 1px solid #bbb; color: #555; }
.go { width: 30px; display: grid; place-items: center; }
.address .go:first-child { width: 18px; margin-right: 4px; }
.go svg { width: 16px; height: 16px; }
.off { color: #ccc; }
.right { transform: rotate(180deg); }
.upward { transform: rotate(90deg); }
.recent svg { width: 6px; height: 6px; margin: 0 5px 0 6px; }
.address .up { width: 24px; margin-right: 2px; color: #666; }
.crumbs { flex: 1; min-width: 0; display: flex; align-items: center; height: 31px; border: 1px solid #d9d9d9; padding-left: 3px; }
.crumbs a { color: #1b1b1b; white-space: nowrap; }
.sep { width: 8px; height: 8px; margin: 0 8px 0 9px; }
.crumbs .i16 + .sep { margin: 0 9px 0 6px; }
.drop { margin-left: auto; padding: 0 12px; }
.drop svg { width: 9px; height: 9px; }
.reload { width: 34px; height: 31px; margin-left: -1px; display: grid; place-items: center; border: 1px solid #d9d9d9; }
.search { display: flex; align-items: center; gap: 12px; width: 248px; height: 31px; margin-left: 12px; padding-left: 12px; border: 1px solid #d9d9d9; color: #8a8a8a; }
.search input { flex: 1; min-width: 0; outline: 0; }
.search input::placeholder { color: #6d6d6d; opacity: 1; }

.main { flex: 1; min-height: 0; display: flex; }
.tree { list-style: none; width: 153px; margin-left: 1px; padding-top: 8px; overflow: hidden; flex: none; }
.tree li { display: flex; align-items: center; height: 24px; padding-left: 14px; white-space: nowrap; }
.tree .root { padding-left: 6px; }
.tree .root + .root { margin-top: 8px; }
.tree li:last-child { margin-top: 8px; }
.tree .on { background: #cce8ff; }
.exp { width: 9px; height: 9px; color: #a0a0a0; margin-right: 9px; }
.exp.dark { color: #404040; }
.tree a { margin-left: 5px; }

.vbar { width: 15px; flex: none; display: flex; flex-direction: column; align-items: center; background: #f0f0f0; color: #505050; }
.vbar svg, .hbar svg { width: 8px; height: 8px; margin: 5px; }
.track { flex: 1; align-self: stretch; display: flex; min-height: 0; }
.track i { background: #cdcdcd; flex: 1; }
.nav-track { padding-top: 38px; }
.list-track { align-items: flex-start; justify-content: flex-end; flex-direction: column; padding-bottom: 30px; }
.list-track i { width: 100%; flex: none; height: 49px; }

.files { flex: 1; min-width: 0; display: flex; flex-direction: column; margin-left: 5px; }
.filebody { flex: 1; min-height: 0; display: flex; }
.view { flex: 1; min-width: 0; overflow: hidden; margin-right: 1px; }
.hbar { display: flex; align-items: center; height: 15px; margin: 1px 16px 0 0; background: #f0f0f0; color: #505050; flex: none; }
.hbar .track { padding-right: 12%; }
table { table-layout: fixed; width: 100%; border-collapse: collapse; }
.c-gut { width: 14px; }
.c-chk { width: 19px; }
.c-name { width: 238px; }
.c-date { width: 144px; }
.c-type { width: 120px; }
th, td { padding: 0 0 0 7px; text-align: left; white-space: nowrap; overflow: hidden; }
th { height: 27px; font-weight: 400; color: #4c607a; border-right: 1px solid #e5e5e5; }
th:first-child { padding-left: 11px; border-right: 0; }
th:last-child { border-right: 0; }
th.name { position: relative; padding-left: 3px; }
.sort { position: absolute; left: 104px; top: 0; width: 8px; height: 6px; color: #777; }
td { height: 21px; color: #6d6d6d; }
td:nth-child(2) { padding-left: 4px; }
td:nth-child(3) { padding-left: 0; color: #000; }
.fn { display: flex; align-items: center; gap: 4px; height: 21px; }
.sel td + td { background: #d9d9d9; }
input[type="checkbox"] { appearance: none; display: block; width: 13px; height: 13px; background: #fff; border: 1px solid #333; }
input[type="checkbox"]:checked::after { content: ""; display: block; width: 9px; height: 5px; margin: 2px 1px; border: solid #333; border-width: 0 0 1px 1px; transform: rotate(-45deg); }

.preview { width: 277px; flex: none; margin-left: 2px; padding: 7px 0 0 24px; border-left: 1px solid #f0f0f0; color: #1e395b; }
.preview h2 { font-size: 16px; line-height: 22px; color: #000; }
.thumb { width: 74px; height: 84px; margin: 15px 0 13px 6px; }
.preview p { margin-top: 2px; }
.acomma { font-size: 26px; fill: #33c481; }
dl { display: grid; grid-template-columns: 62px 1fr; }
dt { color: #5b6b80; }

.status { display: flex; align-items: center; height: 25px; padding-left: 15px; flex: none; color: #1e395b; }
.status span { line-height: 12px; padding-right: 10px; border-right: 1px solid #eee; }
.status .chosen { padding: 0 11px 0 10px; border: 0; }
.modes { margin-left: auto; display: flex; gap: 3px; align-items: center; padding-right: 8px; }
.modes svg { width: 16px; height: 16px; }
.modes button { display: grid; place-items: center; }
.modes .on { width: 22px; height: 23px; border: 1px solid #26a0da; background: #cbe8f6; }
```
